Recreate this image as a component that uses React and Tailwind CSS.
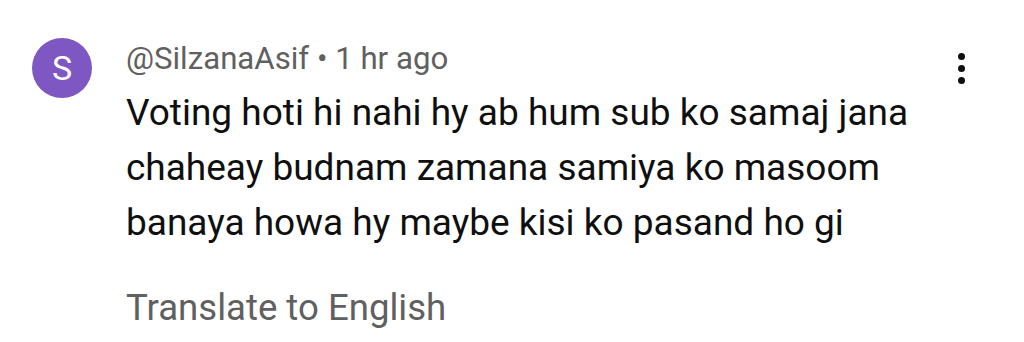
export default function App() {
  return (
    <div className="w-[1024px] h-[342px] bg-white overflow-hidden" style={{ fontFamily: 'Roboto, sans-serif' }}>
      <div className="flex pl-[32px] pt-[38px] pr-[56px]">
        <div className="w-[60px] h-[60px] rounded-full bg-[#7e57c2] flex items-center justify-center shrink-0">
          <span className="text-white text-[34px] leading-none">S</span>
        </div>
        <div className="ml-[34px] flex-1">
          <div className="flex items-start justify-between -mt-[1px]">
            <div className="text-[31.2px] leading-[44px] text-[#606060]">@SilzanaAsif • 1 hr ago</div>
            <div className="flex flex-col items-center gap-[5px] mt-[16px] mr-[3px]">
              <span className="w-[7px] h-[7px] rounded-full bg-[#0f0f0f]"></span>
              <span className="w-[7px] h-[7px] rounded-full bg-[#0f0f0f]"></span>
              <span className="w-[7px] h-[7px] rounded-full bg-[#0f0f0f]"></span>
            </div>
          </div>
          <p className="text-[37px] leading-[55px] text-[#0f0f0f] mt-[1px] w-[800px]">
            Voting hoti hi nahi hy ab hum sub ko samaj jana chaheay budnam zamana samiya ko masoom banaya howa hy maybe kisi ko pasand ho gi
          </p>
          <div className="text-[36.6px] leading-[44px] text-[#606060] mt-[36px]">Translate to English</div>
        </div>
      </div>
    </div>
  );
}
